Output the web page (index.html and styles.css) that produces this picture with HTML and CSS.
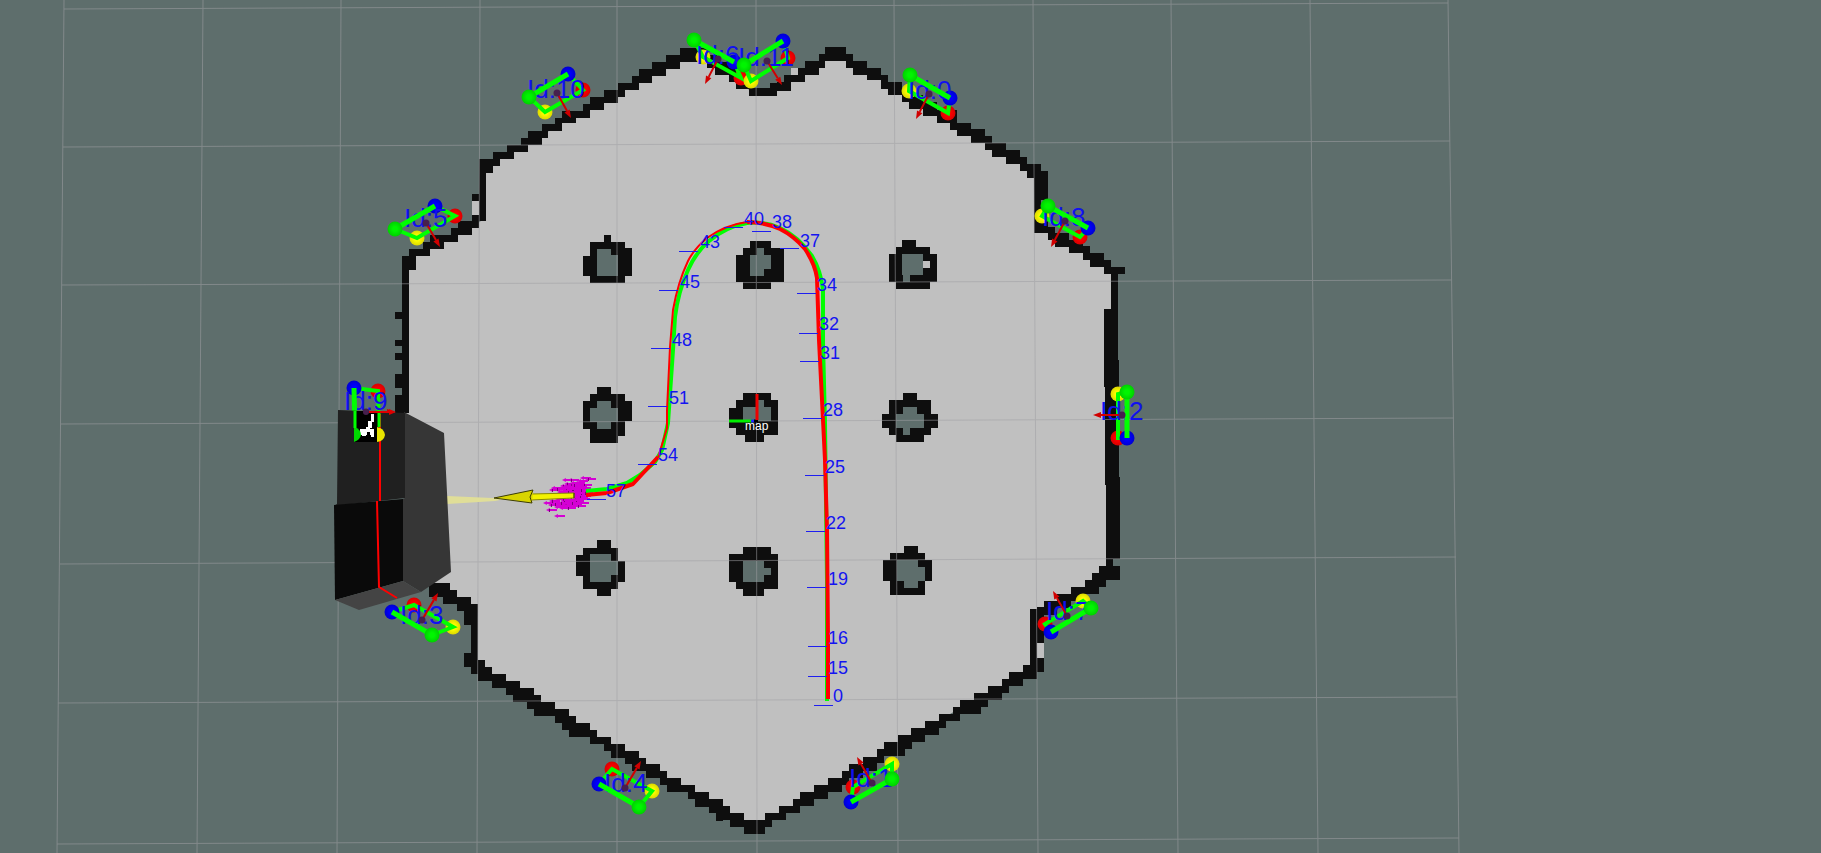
FILE: index.html
```html
<!DOCTYPE html>
<html lang="en">
<head>
<meta charset="utf-8">
<title>Map view</title>
<link rel="stylesheet" href="styles.css">
</head>
<body>
<main class="viewport">
<svg class="scene" viewBox="0 0 1821 853" preserveAspectRatio="xMidYMid slice" role="img" aria-label="Occupancy map with robot trajectory and markers">
  <defs>
    <radialGradient id="shade-red"><stop offset=".3" stop-color="#f00"/><stop offset="1" stop-color="#d80000"/></radialGradient>
    <radialGradient id="shade-green"><stop offset=".3" stop-color="#00f500"/><stop offset="1" stop-color="#00cf00"/></radialGradient>
    <radialGradient id="shade-blue"><stop offset=".3" stop-color="#00f"/><stop offset="1" stop-color="#0000d0"/></radialGradient>
    <radialGradient id="shade-yellow"><stop offset=".3" stop-color="#ff0"/><stop offset="1" stop-color="#dcd800"/></radialGradient>
  </defs>

  <polygon class="floor" points="690,55 673,62 659,69 645,76 635,83 625,90 611,96 597,103 586,110 573,115 558,124 545,134 530,140 524,148 514,150 500,156 485,166 482,180 482,220 476,225 465,228 453,236 440,242 427,249 412,256 405,262 405,560 440,595 455,602 468,608 474,625 474,665 485,676 499,681 513,688 523,693 535,701 545,709 562,717 575,727 588,732 598,738 610,743 618,751 632,758 645,766 653,771 664,778 674,785 692,792 702,799 715,807 726,813 737,820 755,827 770,820 779,816 789,810 797,806 807,799 821,792 835,785 845,778 856,771 870,764 880,756 891,749 905,742 918,735 932,728 943,720 950,714 962,707 981,700 995,693 1006,686 1016,679 1027,672 1033,660 1033,612 1048,606 1060,601 1072,597 1085,591 1092,583 1102,574 1110,566 1113,550 1111,360 1114,290 1114,270 1107,267 1097,260 1090,253 1076,246 1062,240 1051,230 1040,222 1038,185 1034,170 1023,164 1013,157 999,150 988,143 978,136 964,129 953,123 943,116 930,109 916,102 905,95 895,89 884,82 874,74 860,68 849,61 836,54 822,60 812,68 795,78 784,85 775,88 763,92 749,90 743,82 735,76 722,68 710,58 702,54"/>
  <g id="cells"></g>

  <g class="grid">
    <path d="M64 0L57 853M203 0L197 853M341 0L337 853M480 0L477 853M617 0L617 853M756 0L757 853M894 0L898 853M1033 0L1038 853M1171 0L1178 853M1310 0L1318 853M1448 0L1459 853"/>
    <path d="M64 9L1448 3M63 147L1450 141M62 285L1452 280M61 424L1454 418M60 564L1456 557M58 703L1457 697M57 844L1459 838"/>
  </g>

  <g id="markers"></g>

  <g class="axes">
    <path class="axis-y" d="M729 421H753"/>
    <path class="axis-z" d="M751 421H755"/>
    <path class="axis-o" d="M754 421H758"/>
    <path class="axis-x" d="M757 394V420"/>
    <text class="frame-name" x="745" y="430">map</text>
  </g>

  <g id="particles"></g>

  <g class="tracks">
    <path class="truth" d="M827 701L827 580L825 423L823 343L823 290Q821 271 812 256Q798 236 780 228Q764 221 747 223Q725 227 709 241Q696 252 688 270Q678 292 675 317L673 350L668 423L662 450L655 462L640 475L627 483L607 489L586 491"/>
    <path class="estimate" d="M828 699L828 640L827 530L825 460L822 400L819 340L817 278Q815 264 805 249Q794 236 780 229Q764 222 747 222"/>
    <path class="estimate thin" d="M747 222Q725 225 707 238Q694 249 688 261Q678 282 673 310L670 347L667 410L667 428L658 458"/>
    <path class="estimate" d="M658 457L633 484L607 493L586 495"/>
  </g>
  <g id="poses"></g>

  <g class="arrow">
    <polygon class="cone" points="447,496 492,498 510,498 495,501 447,504"/>
    <path class="shaft" d="M531 494L574 493V498L531 500z"/>
    <polygon class="head" points="494,498 533,490 532,503"/>
    <path class="edge" d="M494 498L533 490L530 497L532 503z"/>
    <path class="edge" d="M574 493V498"/>
  </g>

  <g class="body">
    <polygon class="side" points="404,412 444,433 451,572 421,592 403,581 403,499 405,498"/>
    <polygon class="top" points="338,410 405,413 405,498 334,506 337,504"/>
    <polygon class="front" points="334,505 403,499 403,581 335,600"/>
    <polygon class="base" points="335,600 403,581 421,592 359,610"/>
    <path class="scan" d="M380 414L380 501M377 501L379 587L397 598"/>
    <rect class="tile" x="354" y="411" width="24" height="31"/>
    <path class="tile-code" d="M371 414h3v8h-3zM368 421h4v7h-4zM366 427h4v5h-4zM370 429h4v6h-4zM360 429h7v6h-7zM362 434h4v2h-4zM371 433h3v4h-3z"/>
    <path class="tile-l" d="M354 427Q361 429 361 435Q360 440 354 442z"/>
    <path class="tile-r" d="M377 427Q384 428 385 435Q384 441 377 442z"/>
    <path class="tile-edge" d="M355 411V428M379 412V427"/>
    <path class="tile-arrow" d="M369 411L389 411V409L396 412L389 415V413L369 413z"/>
    <circle class="hub" cx="366" cy="412" r="3"/>
  </g>
</svg>
</main>
<script src="map.js"></script>
</body>
</html>
```

FILE: styles.css
```css
html, body { margin: 0; height: 100%; }
body { background: #5e6e6c; font-family: "Liberation Sans", Arial, sans-serif; }
.viewport { display: flex; height: 100vh; overflow: hidden; }
.scene { flex: 1; min-width: 0; height: 100%; display: block; }

.floor, .free { fill: #c0c0c0; }
.wall { fill: #0e0e0e; shape-rendering: crispEdges; }
.free, .unknown { shape-rendering: crispEdges; }
.unknown { fill: #5e6e6c; }
.grid { fill: none; stroke: #a0a0a4; stroke-width: 1; opacity: .55; }

.ball-red { fill: url(#shade-red); }
.ball-green { fill: url(#shade-green); }
.ball-blue { fill: url(#shade-blue); }
.ball-yellow { fill: url(#shade-yellow); }
.link { fill: none; stroke: #0f0; stroke-width: 4; }
.link-front { stroke: #0f0; stroke-width: 5; }
.hub { fill: #46204e; }
.normal { stroke: #d00000; stroke-width: 2; fill: #d00000; }
.tip { fill: #d00000; }
.tag { fill: #1010f0; font-size: 26px; }

.pose { fill: #1414f0; font-size: 18px; }
.tick { stroke: #1e1ef0; stroke-width: 1; shape-rendering: crispEdges; }

.tracks path { fill: none; stroke-linejoin: round; }
.tracks .truth { stroke: #0f0; stroke-width: 4; }
.tracks .estimate { stroke: #f00; stroke-width: 4; }
.tracks .thin { stroke-width: 2; }

.axes path { stroke-width: 3; }
.axes .axis-x { stroke: #e00; }
.axes .axis-y { stroke: #0e0; }
.axes .axis-z { stroke: #22f; }
.axes .axis-o { stroke: #000; }
.frame-name { fill: #fff; font-size: 12px; }

.particle { fill: #d400d4; }
.particle-dark { fill: #7a007a; }

.arrow .cone { fill: #e0de98; }
.arrow .shaft { fill: #f2f200; stroke: #8a8a00; stroke-width: 1; }
.arrow .head { fill: #d8d400; }
.arrow .edge { fill: none; stroke: #3c3c00; stroke-width: 1; }

.body .side { fill: #363636; }
.body .top { fill: #202020; }
.body .front { fill: #0a0a0a; }
.body .base { fill: #444; }
.body .scan { fill: none; stroke: #f00; stroke-width: 2; }
.tile { fill: #000; }
.tile-code { fill: #fff; }
.tile-l { fill: #00d800; }
.tile-r { fill: #e8e400; }
.tile-edge { stroke: #0f0; stroke-width: 3; }
.tile-arrow { fill: #e00000; }
```

FILE: map.js
```js
const NS = "http://www.w3.org/2000/svg";
function add(parent, name, attrs, text) {
  const el = document.createElementNS(NS, name);
  for (const k in attrs) el.setAttribute(k, attrs[k]);
  if (text !== undefined) el.textContent = text;
  parent.appendChild(el);
  return el;
}

// Map patches: origin in scene units, boxes as x1 y1 x2 y2 in thirds of a unit.
const patches = [
  { at: [380, 30], kind: "wall", boxes: `900 54 950 96,858 75 900 117,816 96 858 138,777 117 816 159,756 138 777 180,714 159 777 180,714 159 735 200,672 180 714 218,630 201 672 239,610 222 630 260,546 243 630 264,546 243 588 280,525 264 546 302,486 283 546 302,486 283 504 323,444 303 504 323,444 303 486 345,423 324 444 365,381 345 444 366,339 366 402 387,339 366 360 408,297 387 339 429,297 387 318 573,276 492 297 513,276 555 297 594,234 573 276 615,213 594 276 615,213 594 234 636,150 615 234 636,150 615 192 657,129 636 150 678,87 657 150 678,87 657 108 720,66 678 87 780,
630 636 735 758,609 678 630 738,735 654 756 738,672 615 693 636` },
  { at: [380, 30], kind: "free", boxes: `276 513 297 555` },
  { at: [380, 30], kind: "unknown", boxes: `651 657 693 738,693 675 714 738` },
  { at: [660, 20], kind: "wall", boxes: `0 126 18 168,18 105 60 147,60 84 145 126,140 105 170 145,165 125 207 166,207 145 228 186,228 160 268 207,267 205 351 228,351 186 393 213,330 190 351 210,372 165 435 186,414 144 477 165,435 123 477 165,477 102 495 144,495 81 558 123,558 102 579 144,579 123 621 165,621 144 663 181,663 165 684 207,684 186 726 225,726 205 747 245` },
  { at: [660, 20], kind: "free", boxes: `393 144 414 165` },
  { at: [870, 20], kind: "wall", boxes: `96 205 117 245,117 225 159 267,159 245 201 288,201 270 261 308,240 290 261 330,240 309 303 330,261 309 303 348,303 327 345 369,303 348 366 369,345 348 366 390,345 370 408 390,366 370 408 411,408 390 450 432,450 411 471 453,471 432 513 474,492 453 534 540,492 453 513 638,492 600 534 638,534 620 555 659,555 638 597 680,597 659 639 699,597 678 660 699,639 699 702 720,639 680 660 720,660 699 702 741,702 720 723 762,702 741 765 762,723 741 744 870,702 866 744 1100` },
  { at: [940, 360], kind: "wall", boxes: `495 0 537 376,498 350 540 597,498 597 519 618,477 618 540 660,456 639 498 681,435 660 477 702,393 681 435 723,350 702 420 723,312 723 393 745,300 742 350 765,270 747 291 900,291 742 312 850` },
  { at: [740, 590], kind: "wall", boxes: `870 57 890 266,890 204 912 246,849 225 870 266,807 246 849 288,786 267 807 309,744 288 786 329,702 309 786 329,660 330 744 351,660 351 723 372,639 351 660 393,597 372 660 393,597 372 618 414,555 393 618 414,555 393 597 435,513 414 555 456,474 435 516 477,432 456 474 498,474 477 495 498,411 477 432 519,369 501 411 543,327 522 369 564,306 543 327 585,264 564 306 606,222 585 264 627,180 606 222 648,159 627 180 669,117 648 180 669,75 669 138 690,75 669 96 711,12 690 75 732` },
  { at: [740, 590], kind: "free", boxes: `890 160 912 204` },
  { at: [420, 590], kind: "wall", boxes: `930 669 972 711,909 648 930 690,888 648 909 693,867 627 909 669,825 606 867 651,804 585 825 627,741 585 825 606,741 564 783 606,720 543 741 585,678 522 720 564,636 504 678 543,615 483 657 522,573 462 615 504,552 441 573 483,510 420 531 462,531 441 573 462,447 399 510 441,426 378 468 420,405 357 447 399,342 336 405 378,321 336 363 357,279 315 363 335,258 294 342 315,258 273 300 315,279 294 321 335,216 252 258 294,174 231 216 273,153 210 195 252,132 189 174 231,153 42 174 252,132 21 153 105,111 21 132 63,27 0 111 21,69 0 111 42` },
  { at: [320, 400], kind: "wall", boxes: `327 549 390 591,390 570 411 612` },
  { at: [320, 240], kind: "wall", boxes: `246 48 267 520,246 48 288 90,267 27 330 48,309 6 372 27,225 216 246 237,225 300 246 318,225 339 246 360,225 402 246 444,225 465 246 525` },
  { at: [700, 210], kind: "wall", boxes: `108 135 252 216,129 114 252 135,150 93 213 114,129 216 213 237,606 90 648 111,588 111 690 237,567 132 711 215,129 549 213 570,108 570 234 675,87 594 108 654,135 675 192 696,609 549 651 570,567 570 693 675,546 612 714 654,588 675 672 696` },
  { at: [700, 210], kind: "unknown", boxes: `150 135 213 177,150 177 192 198,171 114 192 135,606 132 669 195,609 195 630 215,129 591 213 633,171 570 192 591,588 612 672 654,609 591 651 612,609 654 630 675` },
  { at: [700, 210], kind: "free", boxes: `669 153 690 174` },
  { at: [560, 210], kind: "wall", boxes: `111 531 153 552,90 552 195 678,69 573 90 657,195 573 216 633,90 657 174 699` },
  { at: [560, 210], kind: "unknown", boxes: `90 594 174 636,111 573 153 657` },
  { at: [560, 440], kind: "wall", boxes: `111 300 153 324,69 324 174 447,48 345 69 408,174 363 195 426,111 447 153 468,549 321 633 342,507 342 654 426,528 426 654 447,549 447 612 468,1032 318 1074 339,990 339 1095 465,969 360 1116 423` },
  { at: [560, 440], kind: "unknown", boxes: `90 342 153 426,153 363 174 405,549 363 612 426,612 384 633 405,1011 360 1074 423,1074 381 1095 423,1032 423 1074 444` }
];
const cells = document.getElementById("cells");
for (const p of patches) {
  const d = p.boxes.split(",").map(b => {
    const v = b.trim().split(" ").map((n, i) => Math.round(p.at[i % 2] + n / 3));
    return `M${v[0]} ${v[1]}H${v[2]}V${v[3]}H${v[0]}z`;
  }).join("");
  add(cells, "path", { class: p.kind, d });
}

// name, label position, then corner balls g b r y, centre and arrow tip
const markers = [
  ["Id:10", 527, 98, [529,97],[568,74],[583,90],[545,112],[557,93],[571,118]],
  ["Id:5", 404, 227, [395,229],[435,206],[455,216],[417,238],[426,223],[440,247]],
  ["Id:6", 696, 64, [694,40],[734,62],[741,78],[703,57],[718,59],[705,84]],
  ["Id:11", 738, 66, [744,65],[783,41],[788,58],[751,81],[767,61],[782,85]],
  ["Id:0", 908, 99, [910,75],[950,98],[948,113],[909,91],[929,94],[916,119]],
  ["Id:8", 1042, 226, [1048,206],[1088,228],[1080,237],[1042,216],[1065,221],[1051,247]],
  ["Id:2", 1100, 420, [1127,392],[1127,438],[1118,438],[1118,394],[1122,415],[1093,415]],
  ["Id:7", 1046, 620, [1091,608],[1051,632],[1045,624],[1083,601],[1067,616],[1053,591]],
  ["Id:1", 849, 787, [892,779],[851,802],[853,787],[892,764],[872,783],[857,757]],
  ["Id:4", 604, 792, [639,807],[599,784],[612,769],[652,791],[625,788],[641,761]],
  ["Id:3", 400, 624, [432,635],[392,612],[414,605],[453,627],[422,620],[438,593]],
  ["Id:9", 344, 410, [355,434],[354,388],[378,391],[379,435],[366,412],[395,412]]
];
const layer = document.getElementById("markers");
for (const [name, x, y, g, b, r, ye, c, a] of markers) {
  const ball = (p, k) => add(layer, "circle", { class: "ball-" + k, cx: p[0], cy: p[1], r: 7.5 });
  ball(r, "red");
  ball(ye, "yellow");
  add(layer, "path", { class: "link", d: `M${g}L${ye}L${r}L${b}` });
  ball(b, "blue");
  add(layer, "text", { class: "tag", x, y }, name);
  add(layer, "path", { class: "link-front", d: `M${g}L${b}` });
  ball(g, "green");
  const len = Math.hypot(a[0] - c[0], a[1] - c[1]);
  const ux = (a[0] - c[0]) / len, uy = (a[1] - c[1]) / len;
  const m = [a[0] - ux * 8, a[1] - uy * 8];
  add(layer, "path", { class: "normal", d: `M${c}L${m}` });
  add(layer, "polygon", { class: "tip", points: `${a} ${m[0] - uy * 3},${m[1] + ux * 3} ${m[0] + uy * 3},${m[1] - ux * 3}` });
  add(layer, "circle", { class: "hub", cx: c[0], cy: c[1], r: 3.5 });
}

// pose number, label x and baseline, tick x and y
const poses = [
  [0,833,702,814,706],[15,828,674,808,677],[16,828,644,808,647],[19,828,585,807,588],
  [22,826,529,806,532],[25,825,473,805,476],[28,823,416,803,419],[31,820,359,800,362],
  [32,819,330,799,334],[34,817,291,797,294],[37,800,247,780,249],[38,772,228,752,232],
  [40,744,225,724,228],[43,700,248,679,252],[45,680,288,659,291],[48,672,346,651,349],
  [51,669,404,648,407],[54,658,461,638,465],[57,606,497,587,500]
];
const poseLayer = document.getElementById("poses");
for (const [n, x, y, tx, ty] of poses) {
  add(poseLayer, "line", { class: "tick", x1: tx, y1: ty - 0.5, x2: tx + 19, y2: ty - 0.5 });
  add(poseLayer, "text", { class: "pose", x, y }, n);
}

// particle cloud: arrow tips
const tips = [[562,480],[568,480],[580,478],[585,479],[577,481],[549,490],[551,488],[554,489],[543,503],[546,510],[554,516],[560,486],[558,489],[564,484],[570,483],[575,485],[572,487],[567,487],[580,488],[563,490],[557,492],[570,491],[577,492],[582,490],[562,493],[568,494],[575,495],[580,496],[565,497],[572,498],[555,499],[549,501],[553,503],[560,500],[566,502],[573,501],[578,503],[548,505],[557,505],[563,505],[570,506],[575,506],[559,508],[565,508],[554,507],[568,485],[573,489],[578,494],[574,483],[581,485],[571,504],[562,503],[567,500],[552,504],[560,488],[576,498],
[561,491],[565,492],[572,493],[578,490],[573,496],[577,497],[579,499],[582,493],[564,487],[569,489],[576,487],[561,502],[565,504],[569,503],[574,499],[568,497],[562,506],[571,485],[566,489],[558,503]];
const cloud = document.getElementById("particles");
tips.forEach(([x, y], i) => {
  add(cloud, "path", { class: "particle", d: `M${x} ${y}l4 -2v1h7v2h-7v1z` });
  if (i % 2) add(cloud, "path", { class: "particle-dark", d: `M${x + 3} ${y - 1}h1v3h-1z` });
});
```
